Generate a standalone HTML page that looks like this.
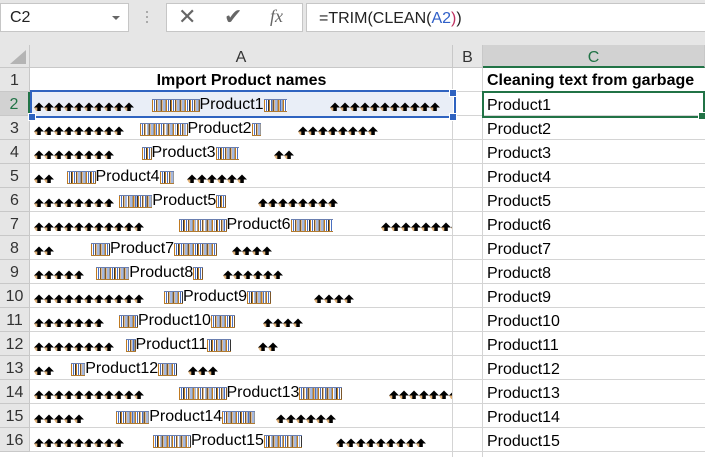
<!DOCTYPE html>
<html><head><meta charset="utf-8"><style>
body{margin:0;width:705px;height:457px;overflow:hidden;background:#fff;font-family:"Liberation Sans",Arial,sans-serif;position:relative}
.a{position:absolute}
.top{left:0;top:0;width:705px;height:45px;background:#e6e6e6}
.box{background:#fff;border:1px solid #c6c6c6;box-sizing:border-box}
.colh{top:45px;height:23px;background:#e6e6e6;border-right:1px solid #c8c8c8;box-sizing:border-box;text-align:center;font-size:16px;line-height:23px;color:#333;border-bottom:1px solid #c8c8c8}
.rh{left:0;width:30px;height:24px;background:#e6e6e6;border-bottom:1px solid #c8c8c8;border-right:1px solid #c8c8c8;box-sizing:border-box;text-align:center;font-size:16px;line-height:26px;color:#333}
.hl{left:30px;width:675px;height:1px;background:#d4d4d4}
.vl{top:68px;width:1px;height:389px;background:#d4d4d4}
svg.ar{position:absolute;height:9px}
.row{position:absolute;height:24px;display:flex;align-items:center;padding-top:2px;box-sizing:border-box}
.bx{display:inline-block;height:13px;background:repeating-linear-gradient(90deg,#c07a20 0 1px,#fff 1px 2px,#4a70c0 2px 3px,#fff 3px 4px,#333 4px 4.75px);border-top:1px solid #6a7fb0;border-bottom:1px solid #b07a30;box-sizing:border-box}
.p{font-size:16px;line-height:24px}
.pc{font-size:16px;line-height:28px}
</style></head><body>
<svg width="0" height="0" style="position:absolute"><defs><pattern id="ap" width="10" height="9" patternUnits="userSpaceOnUse"><polygon points="5,0.5 10,5.5 6.8,5.5 6.8,9 3.2,9 3.2,5.5 0,5.5" fill="#000"/><polygon points="0,5.5 3.2,5.5 3.2,9 2.2,9" fill="#d08020" opacity=".6"/></pattern></defs></svg>
<div class="a top"></div>
<div class="a box" style="left:0;top:3px;width:129px;height:29px;font-size:16px;line-height:27px;padding-left:9px;color:#222">C2</div>
<div class="a" style="left:112px;top:16px;width:0;height:0;border-left:4px solid transparent;border-right:4px solid transparent;border-top:4px solid #666"></div>
<div class="a" style="left:146px;top:11px;width:2px;height:2px;background:#aaa;box-shadow:0 5px 0 #aaa,0 10px 0 #aaa"></div>
<div class="a box" style="left:166px;top:3px;width:137px;height:29px"></div>
<div class="a" style="left:178px;top:4px;font-size:22px;color:#666">✕</div>
<div class="a" style="left:224px;top:4px;font-size:22px;color:#666">✔</div>
<div class="a" style="left:270px;top:6px;font-size:18px;color:#666;font-family:'Liberation Serif',serif;font-style:italic">fx</div>
<div class="a box" style="left:306px;top:3px;width:400px;height:29px;font-size:16px;line-height:29px;padding-left:12px;color:#222">=TRIM(CLEAN(<span style="color:#3060c8">A2</span><span style="color:#c03060">)</span>)</div>
<div class="a" style="left:0;top:45px;width:30px;height:23px;background:#e6e6e6;border-right:1px solid #c8c8c8;border-bottom:1px solid #c8c8c8;box-sizing:border-box"></div>
<div class="a" style="left:10px;top:50px;width:0;height:0;border-left:16px solid transparent;border-bottom:14px solid #b4b4b4"></div>
<div class="a colh" style="left:30px;width:423px;line-height:26px">A</div>
<div class="a colh" style="left:453px;width:30px;line-height:26px">B</div>
<div class="a colh" style="left:483px;width:222px;background:#d2d2d2;color:#217346;border-bottom:2px solid #217346;line-height:26px">C</div>
<div id="g"></div>
<div class="a" style="left:30px;top:68px;width:423px;text-align:center;font-weight:bold;font-size:16px;line-height:26px">Import Product names</div>
<div class="a" style="left:487px;top:68px;font-weight:bold;font-size:16px;line-height:26px">Cleaning text from garbage</div>
<script>
var h='';
for(var i=0;i<16;i++){var t=68+i*24;h+='<div class="a rh" style="top:'+t+'px'+(i==1?';background:#d2d2d2;color:#217346;border-right:2px solid #217346':'')+'">'+(i+1)+'</div><div class="a hl" style="top:'+(t+23)+'px"></div>';}
h+='<div class="a vl" style="left:452px"></div><div class="a vl" style="left:482px"></div>';
h+='<div class="a" style="left:31px;top:92px;width:422px;height:24px;background:#e9eef7"></div>';
var d=[[10,152,10,1,5,330,11],[9,140,10,2,2,298,8],[8,142,2,3,5,274,2],[2,67,6,4,3,187,6],[8,119,7,5,2,258,8],[11,179,10,6,9,381,8],[2,91,4,7,9,232,4],[5,96,7,8,2,223,6],[11,164,4,9,5,314,4],[7,119,4,10,5,263,4],[8,126,2,11,5,258,2],[2,71,3,12,4,188,3],[11,179,10,13,9,389,7],[5,116,7,14,7,276,6],[9,153,8,15,8,336,9]];
for(var i=0;i<15;i++){var r=d[i],t=92+i*24;
h+='<svg class="ar" style="left:34px;top:'+(t+10)+'px" width="'+r[0]*10+'"><rect width="100%" height="9" fill="url(#ap)"/></svg>';
var w2=Math.min(r[6]*10,452-r[5]);
h+='<svg class="ar" style="left:'+r[5]+'px;top:'+(t+10)+'px" width="'+w2+'"><rect width="100%" height="9" fill="url(#ap)"/></svg>';
h+='<div class="row" style="left:'+r[1]+'px;top:'+t+'px"><span class="bx" style="width:'+(r[2]*4.75)+'px"></span><span class="p">Product'+r[3]+'</span><span class="bx" style="width:'+(r[4]*4.75)+'px"></span></div>';
h+='<div class="a pc" style="left:487px;top:'+t+'px">Product'+(i+1)+'</div>';}
h+='<div class="a" style="left:30px;top:91px;width:422px;height:24px;border:2px solid #2f63c0;box-sizing:content-box;margin:-1px 0 0 0"></div>';
h+='<div class="a" style="left:449px;top:89px;width:6px;height:6px;background:#2f63c0;border:1px solid #fff"></div><div class="a" style="left:449px;top:113px;width:6px;height:6px;background:#2f63c0;border:1px solid #fff"></div><div class="a" style="left:28px;top:113px;width:6px;height:6px;background:#2f63c0;border:1px solid #fff"></div>';
h+='<div class="a" style="left:482px;top:91px;width:219px;height:23px;border:2px solid #217346"></div><div class="a" style="left:698px;top:112px;width:6px;height:6px;background:#217346;border:1px solid #fff"></div>';
document.getElementById('g').innerHTML=h;
</script>
</body></html>
